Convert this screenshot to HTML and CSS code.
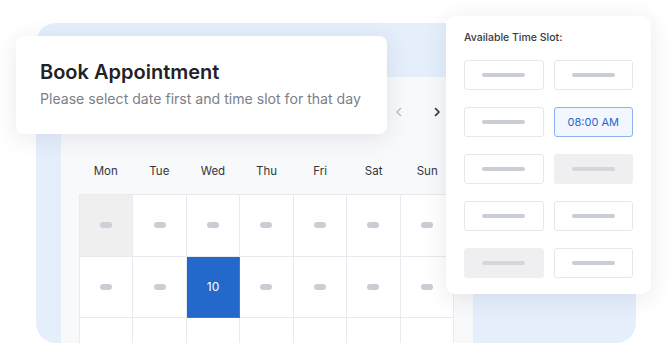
FILE: index.html
```html
<!DOCTYPE html>
<html lang="en">
<head>
    <meta charset="UTF-8">
    <meta name="viewport" content="width=device-width, initial-scale=1.0">
    <title>Book Appointment</title>
    <link rel="stylesheet" href="styles.css">
</head>
<body>
    <div class="stage">
        <div class="backdrop">
            <div class="calendar">
                <div class="cal-nav">
                    <span class="arrow arrow-prev">
                        <svg width="8" height="10" viewBox="0 0 8 10"><path d="M5.5 1.5 2 5l3.5 3.5" fill="none" stroke="currentColor" stroke-width="1.4" stroke-linecap="round" stroke-linejoin="round"/></svg>
                    </span>
                    <span class="arrow arrow-next">
                        <svg width="8" height="10" viewBox="0 0 8 10"><path d="M2.5 1.5 6 5 2.5 8.5" fill="none" stroke="currentColor" stroke-width="1.6" stroke-linecap="round" stroke-linejoin="round"/></svg>
                    </span>
                </div>
                <div class="days">
                    <span>Mon</span><span>Tue</span><span>Wed</span><span>Thu</span><span>Fri</span><span>Sat</span><span>Sun</span>
                </div>
                <div class="grid">
                    <div class="cell muted"><i></i></div>
                    <div class="cell"><i></i></div>
                    <div class="cell"><i></i></div>
                    <div class="cell"><i></i></div>
                    <div class="cell"><i></i></div>
                    <div class="cell"><i></i></div>
                    <div class="cell"><i></i></div>

                    <div class="cell"><i></i></div>
                    <div class="cell"><i></i></div>
                    <div class="cell active">10</div>
                    <div class="cell"><i></i></div>
                    <div class="cell"><i></i></div>
                    <div class="cell"><i></i></div>
                    <div class="cell"><i></i></div>

                    <div class="cell"></div>
                    <div class="cell"></div>
                    <div class="cell"></div>
                    <div class="cell"></div>
                    <div class="cell"></div>
                    <div class="cell"></div>
                    <div class="cell"></div>
                </div>
            </div>
        </div>

        <div class="title-card">
            <h1>Book Appointment</h1>
            <p>Please select date first and time slot for that day</p>
        </div>

        <div class="slots-card">
            <h2>Available Time Slot:</h2>
            <div class="slots">
                <div class="slot"><i></i></div>
                <div class="slot"><i></i></div>
                <div class="slot"><i></i></div>
                <div class="slot selected">08:00 AM</div>
                <div class="slot"><i></i></div>
                <div class="slot disabled"><i></i></div>
                <div class="slot"><i></i></div>
                <div class="slot"><i></i></div>
                <div class="slot disabled"><i></i></div>
                <div class="slot"><i></i></div>
            </div>
        </div>
    </div>
</body>
</html>
```

FILE: styles.css
```css
* {
    box-sizing: border-box;
}
body {
    margin: 0;
    background: #fff;
    font-family: Inter, 'Noto Sans', sans-serif;
    color: #2b2d31;
}
.stage {
    position: relative;
    width: 668px;
    height: 343px;
    overflow: hidden;
}
.backdrop {
    margin: 23px 0 0 36px;
    width: 600px;
    height: 320px;
    background: #e5effc;
    border-radius: 20px;
    padding: 54px 0 0 25px;
    overflow: hidden;
}
.calendar {
    width: 412px;
    height: 300px;
    background: #f8f9fb;
    padding: 0 19px 0 18px;
}
.cal-nav {
    display: flex;
    justify-content: flex-end;
    align-items: center;
    height: 70px;
    padding-right: 12px;
    gap: 28px;
}
.arrow {
    display: flex;
    width: 10px;
    justify-content: center;
}
.arrow-prev {
    color: #b8bcc4;
}
.arrow-next {
    color: #2b2d31;
}
.days {
    display: grid;
    grid-template-columns: repeat(7, 1fr);
    height: 47px;
    align-items: center;
}
.days span {
    text-align: center;
    font-size: 11.5px;
    color: #34363b;
    margin-top: 1px;
}
.grid {
    display: grid;
    grid-template-columns: repeat(7, 1fr);
    grid-auto-rows: 61.5px;
    border-top: 1px solid #e9eaf0;
    border-left: 1px solid #e9eaf0;
}
.cell {
    display: flex;
    align-items: center;
    justify-content: center;
    background: #fff;
    border-right: 1px solid #e9eaf0;
    border-bottom: 1px solid #e9eaf0;
    font-size: 12px;
}
.cell i {
    display: block;
    width: 12px;
    height: 6px;
    border-radius: 3px;
    background: #c8cdd6;
}
.cell.muted {
    background: #efeff0;
}
.cell.muted i {
    background: #cdd0d6;
}
.cell.active {
    background: #2468cc;
    color: #fff;
    border-color: #3b7ad6;
}
.title-card {
    position: absolute;
    left: 16px;
    top: 36px;
    width: 371px;
    height: 98px;
    background: #fff;
    border-radius: 8px;
    box-shadow: 0 4px 24px rgba(30, 40, 60, 0.1);
    padding: 24px 24px 0 24px;
}
.title-card h1 {
    margin: 0;
    font-size: 20px;
    font-weight: 600;
    color: #1f2226;
    line-height: 24px;
}
.title-card p {
    margin: 6px 0 0;
    font-size: 14.1px;
    color: #7b7f87;
    line-height: 18px;
    white-space: nowrap;
}
.slots-card {
    position: absolute;
    left: 446px;
    top: 16px;
    width: 205px;
    height: 278px;
    background: #fff;
    border-radius: 9px;
    box-shadow: 0 4px 24px rgba(30, 40, 60, 0.1);
    padding: 15px 18px 0 18px;
}
.slots-card h2 {
    margin: 0;
    font-size: 10.5px;
    font-weight: 500;
    color: #37393e;
    line-height: 14px;
}
.slots {
    display: grid;
    grid-template-columns: 79.5px 79.5px;
    column-gap: 10px;
    row-gap: 17px;
    grid-auto-rows: 30px;
    margin-top: 15px;
}
.slot {
    display: flex;
    align-items: center;
    justify-content: center;
    border: 1px solid #e6e7ee;
    border-radius: 3px;
    background: #fff;
    font-size: 11px;
}
.slot i {
    display: block;
    width: 43px;
    height: 4px;
    border-radius: 2px;
    background: #c8cdd6;
}
.slot.selected {
    background: #f1f6ff;
    border-color: #8db2f0;
    color: #2a66cc;
}
.slot.disabled {
    background: #efeff1;
    border-color: #efeff1;
}
.slot.disabled i {
    background: #d4d6da;
}
```
